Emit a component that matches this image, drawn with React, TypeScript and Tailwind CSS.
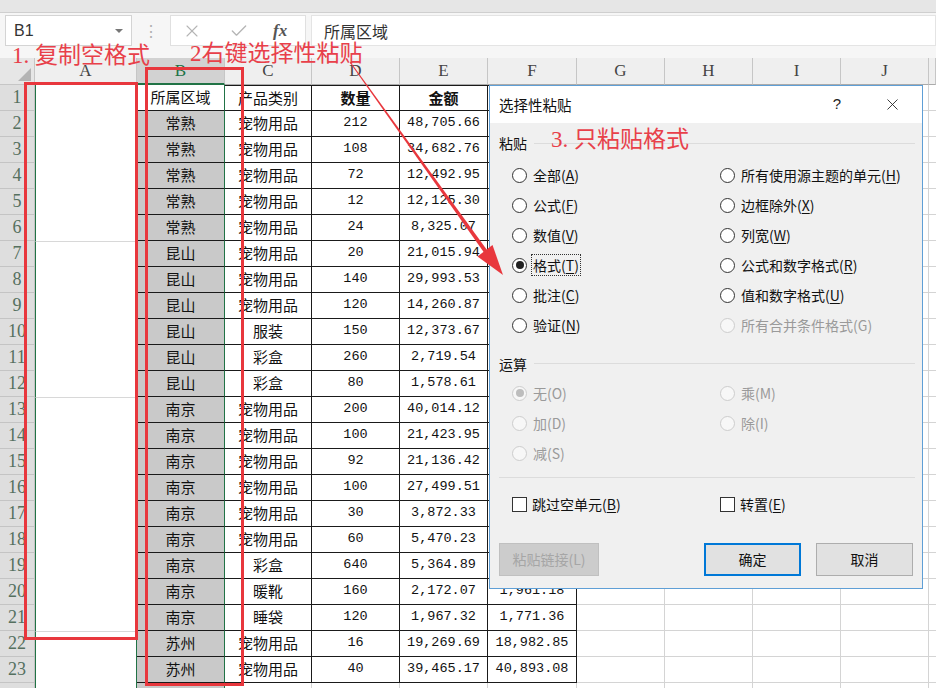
import React from 'react';
import { X, Check } from 'lucide-react';

const sans = "font-['Noto_Sans_CJK_SC',sans-serif]";

const data: string[][] = [
  ['', '', '', '', ''],
  ['常熟', '宠物用品', '212', '48,705.66', ''],
  ['常熟', '宠物用品', '108', '34,682.76', ''],
  ['常熟', '宠物用品', '72', '12,492.95', ''],
  ['常熟', '宠物用品', '12', '12,125.30', ''],
  ['常熟', '宠物用品', '24', '8,325.07', ''],
  ['昆山', '宠物用品', '20', '21,015.94', ''],
  ['昆山', '宠物用品', '140', '29,993.53', ''],
  ['昆山', '宠物用品', '120', '14,260.87', ''],
  ['昆山', '服装', '150', '12,373.67', ''],
  ['昆山', '彩盒', '260', '2,719.54', ''],
  ['昆山', '彩盒', '80', '1,578.61', ''],
  ['南京', '宠物用品', '200', '40,014.12', ''],
  ['南京', '宠物用品', '100', '21,423.95', ''],
  ['南京', '宠物用品', '92', '21,136.42', ''],
  ['南京', '宠物用品', '100', '27,499.51', ''],
  ['南京', '宠物用品', '30', '3,872.33', ''],
  ['南京', '宠物用品', '60', '5,470.23', ''],
  ['南京', '彩盒', '640', '5,364.89', ''],
  ['南京', '暖靴', '160', '2,172.07', '1,961.18'],
  ['南京', '睡袋', '120', '1,967.32', '1,771.36'],
  ['苏州', '宠物用品', '16', '19,269.69', '18,982.85'],
  ['苏州', '宠物用品', '40', '39,465.17', '40,893.08'],
  ['', '', '', '', ''],
];

const ColHeader = ({ label, w, active }: { label: string; w: string; active?: boolean }) => (
  <div
    className={`${w} shrink-0 flex items-center justify-center border-r border-[#c6c6c6] text-[17px] font-['Liberation_Serif',serif] ${
      active ? 'bg-[#d2d2d2] text-[#217346] border-b-2 border-b-[#217346]' : 'bg-[#efefef] text-[#444] border-b border-b-[#ababab]'
    }`}
  >
    {label}
  </div>
);

const SheetRow = ({ n, row }: { n: number; row: string[] }) => {
  const first = n === 1;
  const blank = n > 23;
  const faint = n === 7 || n === 13 || n === 22;
  const tbl = blank ? 'border-r border-b border-[#d4d4d4]' : 'border-r border-b border-[#1a1a1a]';
  const top = first ? 'border-t border-t-[#1a1a1a]' : '';
  return (
    <div className="flex h-[26px]">
      <div className="w-[35px] shrink-0 bg-[#dedede] border-b border-r border-[#c4c4c4] flex items-center justify-center text-[18px] text-[#55705f] font-['Liberation_Serif',serif]">
        {blank ? '' : n}
      </div>
      <div
        className={`w-[102px] shrink-0 bg-white border-l border-r border-[#217346] ${faint ? 'border-t border-t-[#d8d8d8]' : ''}`}
      />
      <div
        className={`w-[88px] shrink-0 flex items-center justify-center text-[15px] text-[#111] border-b border-r border-b-[#1a1a1a] border-r-[#217346] ${
          first ? 'bg-white' : 'bg-[#c9c9c9]'
        } ${sans}`}
      >
        {first ? '所属区域' : row[0]}
      </div>
      <div className={`w-[87px] shrink-0 flex items-center justify-center text-[15px] text-[#111] ${tbl} ${top} ${sans}`}>
        {first ? '产品类别' : row[1]}
      </div>
      <div
        className={`w-[88px] shrink-0 flex items-center justify-center text-[#111] ${tbl} ${top} ${
          first ? `text-[15px] font-bold ${sans}` : "text-[13.5px] font-['Liberation_Mono',monospace]"
        }`}
      >
        {first ? '数量' : row[2]}
      </div>
      <div
        className={`w-[88px] shrink-0 flex items-center justify-center text-[#111] ${tbl} ${top} ${
          first ? `text-[15px] font-bold ${sans}` : "text-[13.5px] font-['Liberation_Mono',monospace]"
        }`}
      >
        {first ? '金额' : row[3]}
      </div>
      <div
        className={`w-[89px] shrink-0 flex items-center justify-center text-[13.5px] text-[#111] font-['Liberation_Mono',monospace] ${tbl} ${top}`}
      >
        {row[4]}
      </div>
      <div className="w-[88px] shrink-0 border-r border-b border-[#d4d4d4]" />
      <div className="w-[88px] shrink-0 border-r border-b border-[#d4d4d4]" />
      <div className="w-[88px] shrink-0 border-r border-b border-[#d4d4d4]" />
      <div className="w-[88px] shrink-0 border-r border-b border-[#d4d4d4]" />
      <div className="w-[7px] shrink-0 border-b border-[#d4d4d4]" />
    </div>
  );
};

const Key = ({ pre, k, post = ')' }: { pre: string; k: string; post?: string }) => (
  <span>
    {pre}
    <span className="underline underline-offset-2">{k}</span>
    {post}
  </span>
);

const Radio = ({
  children,
  checked,
  disabled,
  focus,
}: {
  children: React.ReactNode;
  checked?: boolean;
  disabled?: boolean;
  focus?: boolean;
}) => (
  <div className="h-[30px] flex items-center">
    <div
      className={`w-[15px] h-[15px] rounded-full border flex items-center justify-center shrink-0 ${
        disabled ? 'border-[#cdcdcd] bg-[#f7f7f7]' : 'border-[#333] bg-white'
      }`}
    >
      {checked && <div className={`w-[8px] h-[8px] rounded-full ${disabled ? 'bg-[#bdbdbd]' : 'bg-[#222]'}`} />}
    </div>
    <span
      className={`ml-[5px] px-[1px] text-[14px] leading-[20px] ${disabled ? 'text-[#9a9a9a]' : 'text-[#111]'} ${
        focus ? 'outline-1 outline-dotted outline-[#333]' : ''
      }`}
    >
      {children}
    </span>
  </div>
);

const Section = ({ label, h }: { label: string; h: string }) => (
  <div className={`${h} flex items-end pb-[4px]`}>
    <span className="text-[14px] text-[#111] leading-[20px]">{label}</span>
    <div className="flex-1 ml-[7px] mb-[10px] border-t border-[#dcdcdc]" />
  </div>
);

const Checkbox = ({ children }: { children: React.ReactNode }) => (
  <div className="flex items-center">
    <div className="w-[15px] h-[15px] border border-[#333] bg-white shrink-0" />
    <span className="ml-[5px] text-[14px] text-[#111]">{children}</span>
  </div>
);

const Dialog = () => (
  <div className={`absolute left-[489px] top-[85px] w-[434px] h-[504px] border border-[#5f9fd6] bg-[#f0f0f0] ${sans}`}>
    <div className="h-[37px] bg-white flex items-center pl-[9px]">
      <span className="text-[14.5px] text-[#111]">选择性粘贴</span>
      <span className="ml-auto mr-[42px] text-[15px] text-[#222] font-['Liberation_Sans',sans-serif]">?</span>
      <X size={19} strokeWidth={1.1} className="mr-[20px] text-[#222]" />
    </div>
    <div className="pl-[9px] pr-[7px]">
      <div className="h-[37px] flex items-center pt-[4px]">
        <span className="text-[14px] text-[#111]">粘贴</span>
        <div className="flex-1 ml-[7px] border-t border-[#dcdcdc]" />
      </div>
      <div className="grid grid-cols-[208px_1fr] pl-[13px]">
        <div>
          <Radio>
            <Key pre="全部(" k="A" />
          </Radio>
          <Radio>
            <Key pre="公式(" k="F" />
          </Radio>
          <Radio>
            <Key pre="数值(" k="V" />
          </Radio>
          <Radio checked focus>
            <Key pre="格式(" k="T" />
          </Radio>
          <Radio>
            <Key pre="批注(" k="C" />
          </Radio>
          <Radio>
            <Key pre="验证(" k="N" />
          </Radio>
        </div>
        <div>
          <Radio>
            <Key pre="所有使用源主题的单元(" k="H" />
          </Radio>
          <Radio>
            <Key pre="边框除外(" k="X" />
          </Radio>
          <Radio>
            <Key pre="列宽(" k="W" />
          </Radio>
          <Radio>
            <Key pre="公式和数字格式(" k="R" />
          </Radio>
          <Radio>
            <Key pre="值和数字格式(" k="U" />
          </Radio>
          <Radio disabled>所有合并条件格式(G)</Radio>
        </div>
      </div>
      <Section label="运算" h="h-[38px]" />
      <div className="grid grid-cols-[208px_1fr] pl-[13px]">
        <div>
          <Radio checked disabled>
            无(O)
          </Radio>
          <Radio disabled>加(D)</Radio>
          <Radio disabled>减(S)</Radio>
        </div>
        <div>
          <Radio disabled>乘(M)</Radio>
          <Radio disabled>除(I)</Radio>
        </div>
      </div>
      <div className="h-[10px] border-b border-[#dcdcdc]" />
      <div className="h-[28px] grid grid-cols-[208px_1fr] pl-[13px] mt-[12px]">
        <Checkbox>
          <Key pre="跳过空单元(" k="B" />
        </Checkbox>
        <Checkbox>
          <Key pre="转置(" k="E" />
        </Checkbox>
      </div>
      <div className="flex mt-[25px] h-[33px]">
        <div className="w-[100px] bg-[#cccccc] border border-[#c0c0c0] flex items-center justify-center text-[14px] text-[#a6a6a6]">
          粘贴链接(L)
        </div>
        <div className="ml-[105px] w-[97px] bg-[#e1e1e1] border-2 border-[#0078d7] flex items-center justify-center text-[14px] text-[#111]">
          确定
        </div>
        <div className="ml-[15px] w-[97px] bg-[#e1e1e1] border border-[#adadad] flex items-center justify-center text-[14px] text-[#111]">
          取消
        </div>
      </div>
    </div>
  </div>
);

export default function App() {
  const annot = "absolute text-[23px] leading-none text-[#e8404a] font-['Liberation_Serif','Noto_Sans_CJK_SC',serif]";
  return (
    <div className="relative w-[936px] h-[688px] overflow-hidden bg-white">
      {/* ribbon edge */}
      <div className="h-[13px] bg-[#e6e6e6] border-b border-[#cfcfcf]" />
      {/* formula bar */}
      <div className="h-[45px] bg-[#f6f6f6] flex items-start pt-[2px]">
        <div className="ml-[5px] w-[127px] h-[31px] bg-white border border-[#d4d4d4] flex items-center pl-[8px] pr-[8px]">
          <span className="text-[16px] text-[#333] font-['Liberation_Sans',sans-serif]">B1</span>
          <div className="ml-auto w-0 h-0 border-l-[4px] border-r-[4px] border-t-[4px] border-l-transparent border-r-transparent border-t-[#777]" />
        </div>
        <div className="w-[38px] h-[31px] flex items-center justify-center text-[#b0b0b0] text-[16px]">⋮</div>
        <div className="w-[136px] h-[31px] bg-white border border-[#e0e0e0] flex items-center">
          <X size={20} strokeWidth={1.3} className="ml-[11px] text-[#b5b5b5]" />
          <Check size={20} strokeWidth={1.6} className="ml-[27px] text-[#b5b5b5]" />
          <span className="ml-[24px] text-[17px] italic font-bold text-[#555] font-['Liberation_Serif',serif]">fx</span>
        </div>
        <div className="ml-[5px] flex-1 h-[31px] bg-white border border-[#e4e4e4] flex items-center pl-[12px]">
          <span className={`text-[16px] text-[#333] ${sans}`}>所属区域</span>
        </div>
      </div>
      {/* column headers */}
      <div className="flex h-[27px]">
        <div className="w-[35px] shrink-0 bg-[#e6e6e6] border-r border-b border-[#c6c6c6] flex items-end justify-end p-[3px]">
          <div className="w-0 h-0 border-l-[13px] border-b-[13px] border-l-transparent border-b-[#b4b4b4]" />
        </div>
        <ColHeader label="A" w="w-[102px]" />
        <ColHeader label="B" w="w-[88px]" active />
        <ColHeader label="C" w="w-[87px]" />
        <ColHeader label="D" w="w-[88px]" />
        <ColHeader label="E" w="w-[88px]" />
        <ColHeader label="F" w="w-[89px]" />
        <ColHeader label="G" w="w-[88px]" />
        <ColHeader label="H" w="w-[88px]" />
        <ColHeader label="I" w="w-[88px]" />
        <ColHeader label="J" w="w-[88px]" />
        <ColHeader label="" w="w-[7px]" />
      </div>
      {data.map((row, i) => (
        <SheetRow key={i} n={i + 1} row={row} />
      ))}

      <Dialog />

      {/* annotations */}
      <div className="absolute left-[24px] top-[82px] w-[114px] h-[558px] border-[3px] border-[#e8373d]" />
      <div className="absolute left-[145px] top-[67px] w-[99px] h-[619px] border-[3px] border-[#e8373d]" />
      <div className={`${annot} left-[12px] top-[44px]`}>1. 复制空格式</div>
      <div className={`${annot} left-[190px] top-[42px]`}>2右键选择性粘贴</div>
      <div className={`${annot} left-[551px] top-[128px]`}>3. 只粘贴格式</div>
      <svg className="absolute left-0 top-0 pointer-events-none" width="936" height="688">
        <polygon points="349.6,62.3 350.4,61.7 487,250 484,252.5" fill="#e8373d" />
        <polygon points="503,275 477.5,256.5 492.5,245" fill="#e8373d" />
      </svg>
    </div>
  );
}
